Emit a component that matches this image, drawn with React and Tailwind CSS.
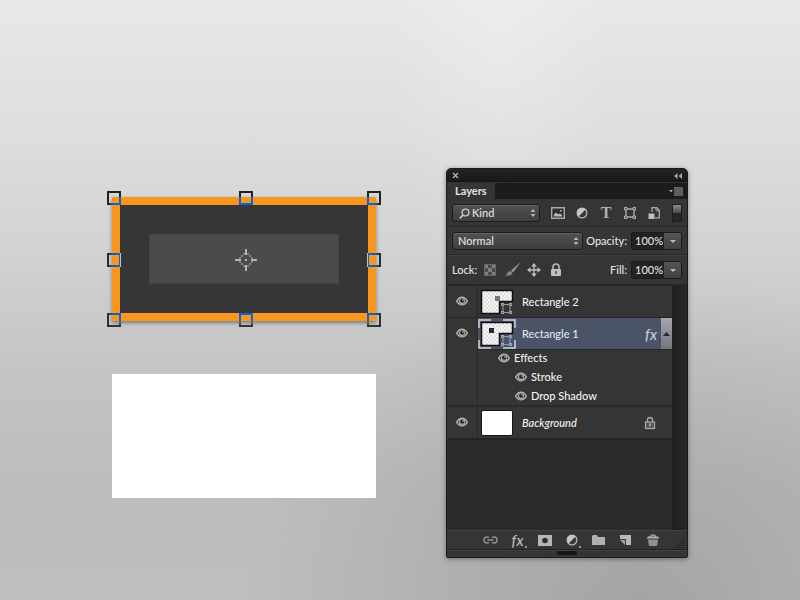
import React from "react";

const handles = [
  "-left-[5px] -top-[6px]",
  "left-[127px] -top-[6px]",
  "left-[255px] -top-[6px]",
  "-left-[5px] top-[56px]",
  "left-[255px] top-[56px]",
  "-left-[5px] top-[116px]",
  "left-[127px] top-[116px]",
  "left-[255px] top-[116px]",
];

function Crosshair() {
  const ring = [
    [8, 4], [12, 4], [6, 6], [14, 6], [4, 8], [16, 8],
    [4, 12], [16, 12], [6, 14], [14, 14], [8, 16], [12, 16],
  ];
  return (
    <svg width="22" height="22" viewBox="0 0 22 22" shapeRendering="crispEdges" aria-hidden="true">
      {ring.map(([x, y]) => (
        <rect key={x + "-" + y} x={x} y={y} width="2" height="2" fill="#808080" />
      ))}
      <path d="M10 0h2v6h-2zM10 16h2v6h-2zM0 10h6v2H0zM16 10h6v2h-6zM10 10h2v2h-2z" fill="#b4b4b4" />
    </svg>
  );
}

function Artwork() {
  return (
    <section aria-label="Canvas" className="flex flex-col gap-[53px] pt-[29px]">
      <div className="relative flex h-[124px] w-[264px] items-center justify-center border-8 border-[#f8961d] bg-[#363636] shadow-[0_2px_4px_rgba(0,0,0,0.4)]">
        <div className="h-[50px] w-[190px] border border-[#444444] bg-[#4b4b4b]" />
        <div className="absolute left-[115px] top-[44px]">
          <Crosshair />
        </div>
        <div className="absolute -left-2 -top-2 mix-blend-difference">
          {handles.map((place) => (
            <span key={place} className={"absolute size-[14px] border-2 border-[#f2fafa] " + place} />
          ))}
        </div>
      </div>
      <div className="h-[124px] w-[264px] bg-white" />
    </section>
  );
}

function Eye() {
  return (
    <svg width="12" height="10" viewBox="0 0 12 10" aria-hidden="true">
      <path d="M.6 5.200C2 2.600 3.800 1.200 6 1.200s4 1.400 5.400 4C10 7.600 8.200 8.900 6 8.900S2 7.600.6 5.200Z" fill="#4a4a4a" stroke="#b0b0b0" strokeWidth="1.400" />
      <circle cx="6" cy="4.900" r="3" fill="#b4b4b4" />
      <circle cx="6.200" cy="4.700" r="2.100" fill="#1f1f1f" />
      <circle cx="7" cy="4" r=".8" fill="#e4e4e4" />
    </svg>
  );
}

function EyeButton({ label, className = "" }) {
  return (
    <button type="button" aria-label={"Toggle visibility of " + label} className={"flex items-center justify-center " + className}>
      <Eye />
    </button>
  );
}

function UpDown() {
  return (
    <svg width="6" height="8" viewBox="0 0 6 8" className="pointer-events-none absolute right-1 top-[5px]" aria-hidden="true">
      <path d="M3 0l2.500 3h-5zM3 8L.5 5h5z" fill="#b4b4b4" />
    </svg>
  );
}

function Adjust() {
  return (
    <svg width="12" height="12" viewBox="0 0 12 12" aria-hidden="true">
      <circle cx="6" cy="6" r="4.900" fill="#3a3a3a" stroke="#b8b8b8" strokeWidth="1.200" />
      <path d="M2.500 9.500A4.900 4.900 0 0 1 9.500 2.500Z" fill="#c6c6c6" />
    </svg>
  );
}

function ShapeIcon() {
  return (
    <svg width="12" height="12" viewBox="0 0 12 12" fill="none" aria-hidden="true">
      <path d="M2 2h8v8H2z" stroke="#a8a8a8" strokeWidth="1.400" />
      <path d="M.5.500h2.500v2.500H.5zM9 .5h2.500v2.500H9zM.5 9h2.500v2.500H.5zM9 9h2.500v2.500H9z" fill="#444" stroke="#b4b4b4" />
    </svg>
  );
}

const filters = [
  {
    label: "Filter pixel layers",
    icon: (
      <svg width="14" height="12" viewBox="0 0 14 12" aria-hidden="true">
        <path d="M.7.700h12.600v10.600H.7z" fill="#303030" stroke="#a9a9a9" strokeWidth="1.400" />
        <path d="M3 9.500V7.500l2-2L7 7.500l1.500-1 2.500 1.500v1.500z" fill="#bdbdbd" />
        <path d="M9 3h1.500v1.500H9z" fill="#bdbdbd" />
      </svg>
    ),
  },
  { label: "Filter adjustment layers", icon: <Adjust /> },
  {
    label: "Filter type layers",
    icon: <span className="font-['Liberation_Serif',serif] text-base font-bold leading-4 text-[#b0b0b0]">T</span>,
  },
  { label: "Filter shape layers", icon: <ShapeIcon /> },
  {
    label: "Filter smart objects",
    icon: (
      <svg width="12" height="12" viewBox="0 0 12 12" aria-hidden="true">
        <path d="M4 5V.7h4.500L11.300 3v7.800H7" fill="none" stroke="#aaa" strokeWidth="1.300" />
        <path d="M8 .700v3h3" fill="none" stroke="#aaa" />
        <path d="M.5 6.500h6V12h-6z" fill="#c0c0c0" />
      </svg>
    ),
  },
];

const selectStyle =
  "h-[18px] w-full appearance-none rounded-[3px] border border-[#1c1c1c] bg-linear-to-b from-[#515151] to-[#3e3e3e] text-[11px] leading-4 text-[#e2e2e2] shadow-[inset_0_1px_0_#626262]";

function Percent({ id, label }) {
  return (
    <div className="flex items-center gap-1">
      <label htmlFor={id}>{label}</label>
      <div className="flex h-[18px] w-[51px] overflow-hidden rounded-[2px] border border-[#1a1a1a]">
        <input id={id} defaultValue="100%" className="w-8 bg-[#222222] pl-[3px] text-[11px] leading-4 text-[#e0e0e0]" />
        <button type="button" aria-label={label + " slider"} className="flex flex-1 items-center justify-center bg-linear-to-b from-[#555555] to-[#414141]">
          <svg width="6" height="3" viewBox="0 0 6 3" aria-hidden="true">
            <path d="M0 0h6L3 3z" fill="#bcbcbc" />
          </svg>
        </button>
      </div>
    </div>
  );
}

const locks = [
  {
    label: "Lock transparent pixels",
    icon: (
      <svg width="12" height="12" viewBox="0 0 12 12" shapeRendering="crispEdges" aria-hidden="true">
        <path d="M0 0h12v12H0z" fill="#666" />
        <path d="M1 1h3v3H1zM8 1h3v3H8zM4 4h4v4H4zM1 8h3v3H1zM8 8h3v3H8z" fill="#7e7e7e" />
        <path d="M4 1h4v3H4zM1 4h3v4H1zM8 4h3v4H8zM4 8h4v3H4z" fill="#4c4c4c" />
      </svg>
    ),
  },
  {
    label: "Lock image pixels",
    icon: (
      <svg width="16" height="14" viewBox="0 0 16 14" aria-hidden="true">
        <path d="M15.700.300L9.200 9 7 7.500z" fill="#929292" stroke="#929292" strokeWidth=".5" />
        <path d="M6.300 8l2.200 1.700c-.4 2.400-3.500 3.600-8 2.600 2-.3 2.300-1 2.900-2.300C4 8.600 5 8 6.300 8z" fill="#858585" />
      </svg>
    ),
  },
  {
    label: "Lock position",
    icon: (
      <svg width="14" height="14" viewBox="0 0 14 14" aria-hidden="true">
        <path d="M7 2v10M2 7h10" stroke="#bcbcbc" strokeWidth="1.400" />
        <path d="M7 0l2.800 3.500H4.200zM7 14l-2.800-3.500h5.600zM0 7l3.500-2.800v5.600zM14 7l-3.500 2.800V4.200z" fill="#bcbcbc" />
      </svg>
    ),
  },
  {
    label: "Lock all",
    icon: (
      <svg width="12" height="14" viewBox="0 0 12 14" aria-hidden="true">
        <path d="M3 7V4a3 3 0 0 1 6 0v3" fill="none" stroke="#bdbdbd" strokeWidth="1.500" />
        <rect x="1" y="6" width="10" height="7" rx="1" fill="#c0c0c0" />
        <path d="M5.300 8h1.400v3H5.300z" fill="#444" />
      </svg>
    ),
  },
];

function Thumbnail({ selected = false }) {
  return (
    <svg width="38" height="30" viewBox="0 0 38 30" aria-hidden="true">
      <defs>
        <pattern id="checks" width="4" height="4" patternUnits="userSpaceOnUse">
          <path d="M0 0h4v4H0z" fill="#f6f6f6" />
          <path d="M0 0h2v2H0zM2 2h2v2H2z" fill="#dedede" />
        </pattern>
      </defs>
      {selected && (
        <path d="M1 9V1h12M25 1h12v8M37 21v8H25M13 29H1v-8" fill="none" stroke="#d0d4dc" strokeWidth="1.500" />
      )}
      <path d="M3.500 3.500h31v11h-13v12h-18z" fill="url(#checks)" stroke="#111" strokeWidth="1.500" />
      {selected ? <path d="M11 9h5v5h-5z" fill="#292929" /> : <path d="M17 9h5v5h-5z" fill="#777" />}
      <path d="M25 17.500h7v8h-7z" fill="none" stroke={selected ? "#8e9bb4" : "#999"} />
      <path
        d="M23 16h3v3h-3zM31 16h3v3h-3zM23 24h3v3h-3zM31 24h3v3h-3z"
        fill={selected ? "#9aa5bb" : "#a0a0a0"}
      />
      <path d="M24 17h1v1h-1zM32 17h1v1h-1zM24 25h1v1h-1zM32 25h1v1h-1z" fill={selected ? "#65718a" : "#555"} />
    </svg>
  );
}

function Effect({ name, className }) {
  return (
    <li className={"flex items-center gap-1 " + className}>
      <EyeButton label={name} className="w-[13px]" />
      <span>{name}</span>
    </li>
  );
}

function Layers() {
  return (
    <div className="flex min-h-0 flex-1 bg-[#2b2b2b]">
      <ul className="min-w-0 flex-1 text-[#f2f2f2]">
        <li className="flex h-8 items-center border-b border-[#252525] bg-[#353535]">
          <EyeButton label="Rectangle 2" className="h-full w-[31px] border-r border-[#2b2b2b] pb-[2px]" />
          <Thumbnail />
          <span className="ml-1.5">Rectangle 2</span>
        </li>
        <li className="border-b-2 border-[#292929] bg-[#353535]">
          <div className="flex h-8">
            <EyeButton label="Rectangle 1" className="w-[31px] border-r border-[#2b2b2b] pb-[2px]" />
            <div className="flex flex-1 items-center border-b border-[#282828] bg-[#4b5467]">
              <Thumbnail selected />
              <span className="ml-1.5 text-[#e2e4ea]">Rectangle 1</span>
              <span className="ml-auto mr-1 text-[15px] italic leading-4 text-[#c9ccd3]">fx</span>
              <button type="button" aria-label="Collapse effects" className="flex h-full w-[11px] items-center justify-center bg-linear-to-b from-[#a6a8af] to-[#72757f]">
                <svg width="7" height="4" viewBox="0 0 7 4" aria-hidden="true">
                  <path d="M0 4h7L3.500 0z" fill="#292929" />
                </svg>
              </button>
            </div>
          </div>
          <ul className="ml-[30px] border-l border-[#2b2b2b]">
            <Effect name="Effects" className="mb-[2px] h-[15px] pl-[19px]" />
            <Effect name="Stroke" className="h-[19px] pl-9" />
            <Effect name="Drop Shadow" className="h-[19px] pl-9" />
          </ul>
        </li>
        <li className="flex h-[33px] items-center border-b-2 border-[#252525] bg-[#353535]">
          <EyeButton label="Background" className="h-full w-[31px] border-r border-[#2b2b2b] pb-[2px]" />
          <span className="ml-[3px] h-[26px] w-8 rounded-[2px] border border-[#141414] bg-white" />
          <em className="ml-[9px]">Background</em>
          <svg width="12" height="14" viewBox="0 0 12 14" className="ml-auto mr-4" aria-label="Locked" role="img">
            <path d="M3.500 6V4a2.500 2.500 0 0 1 5 0v2" fill="none" stroke="#aaa" strokeWidth="1.300" />
            <rect x="1.500" y="6" width="9" height="6.500" fill="#555" stroke="#aaa" strokeWidth="1.200" />
            <path d="M5.300 7.500h1.400v3H5.300z" fill="#bbb" />
          </svg>
        </li>
      </ul>
      <div className="w-[15px] bg-linear-to-r from-[#1e1e1e] to-[#282828]" />
    </div>
  );
}

const actions = [
  {
    label: "Link layers",
    icon: (
      <svg width="15" height="8" viewBox="0 0 15 8" fill="none" stroke="#929292" strokeWidth="1.400" aria-hidden="true">
        <path d="M6 1.500A3 3 0 0 0 4 1a3 3 0 0 0 0 6 3 3 0 0 0 2-.5M9 1.500A3 3 0 0 1 11 1a3 3 0 0 1 0 6 3 3 0 0 1-2-.5M4.500 4h6" />
      </svg>
    ),
  },
  { label: "Add a layer style", dot: true, icon: <span className="text-[15px] italic leading-4 text-[#bcbcbc]">fx</span> },
  {
    label: "Add a mask",
    icon: (
      <svg width="14" height="11" viewBox="0 0 14 11" aria-hidden="true">
        <path d="M0 0h14v11H0z" fill="#b5b5b5" />
        <circle cx="7" cy="5.500" r="2.800" fill="#303030" />
      </svg>
    ),
  },
  { label: "New adjustment layer", dot: true, icon: <Adjust /> },
  {
    label: "New group",
    icon: (
      <svg width="13" height="10" viewBox="0 0 13 10" aria-hidden="true">
        <path d="M0 10V1l1-1h4l1 2h7v8z" fill="#b0b0b0" />
      </svg>
    ),
  },
  {
    label: "New layer",
    icon: (
      <svg width="11" height="10" viewBox="0 0 11 10" aria-hidden="true">
        <path d="M0 0h11v10H6V4H0z" fill="#b8b8b8" />
        <path d="M0 5h5v5z" fill="#a5a5a5" />
      </svg>
    ),
  },
  {
    label: "Delete layer",
    icon: (
      <svg width="12" height="12" viewBox="0 0 12 12" aria-hidden="true">
        <path d="M3.500 3a2.500 2.200 0 0 1 5 0" fill="none" stroke="#aaa" strokeWidth="1.300" />
        <path d="M0 4.500V3.500l1-1h10l1 1v1z" fill="#b5b5b5" />
        <path d="M1 5.500h10l-.7 5.500-1 1H2.700l-1-1z" fill="#909090" />
      </svg>
    ),
  },
];

function Panel() {
  return (
    <aside
      aria-label="Layers panel"
      className="flex h-[390px] w-[242px] flex-col rounded-t-[5px] rounded-b-[2px] border border-[#1b1b1b] bg-[#353535] font-['Lato','Liberation_Sans',sans-serif] text-[11px] font-medium leading-4 text-[#e2e2e2] shadow-[0_1px_5px_rgba(0,0,0,0.4)]"
    >
      <header className="flex h-[13px] items-center justify-between rounded-t-[4px] bg-linear-to-b from-[#242424] to-[#171717] px-[5px]">
        <button type="button" aria-label="Close panel">
          <svg width="7" height="7" viewBox="0 0 7 7" className="block" aria-hidden="true">
            <path d="M1 1l5 5M6 1L1 6" stroke="#b8b8b8" strokeWidth="1.200" />
          </svg>
        </button>
        <button type="button" aria-label="Collapse panel">
          <svg width="8" height="6" viewBox="0 0 8 6" className="block" aria-hidden="true">
            <path d="M3.500 0v6L0 3zM8 0v6L4.500 3z" fill="#a5a5a5" />
          </svg>
        </button>
      </header>
      <div className="flex h-[17px] items-stretch justify-between border-t border-[#303030] bg-[#1c1c1c]">
        <h1 className="bg-[#353535] px-2 font-bold">Layers</h1>
        <button type="button" aria-label="Panel menu" className="mr-1 flex items-center">
          <svg width="14" height="9" viewBox="0 0 14 9" aria-hidden="true">
            <path d="M0 3h4L2 5.500z" fill="#aaa" />
            <path d="M5 0h9v9H5z" fill="#5a5a5a" />
            <path d="M5 .5h9M5 2.500h9M5 4.500h9M5 6.500h9M5 8.500h9" stroke="#666" strokeWidth=".8" />
          </svg>
        </button>
      </div>
      <div className="flex h-7 items-center justify-between border-b border-[#272727] px-[5px]">
        <div className="relative w-[88px]">
          <select aria-label="Filter by" defaultValue="Kind" className={selectStyle + " pl-[19px]"}>
            <option>Kind</option>
          </select>
          <svg width="11" height="11" viewBox="0 0 11 11" className="pointer-events-none absolute left-[7px] top-1" aria-hidden="true">
            <circle cx="6.500" cy="4.500" r="3.400" fill="none" stroke="#c8c8c8" strokeWidth="1.400" />
            <path d="M4 7L.8 10.300" stroke="#c8c8c8" strokeWidth="1.700" />
          </svg>
          <UpDown />
        </div>
        <div className="flex">
          {filters.map((filter) => (
            <button key={filter.label} type="button" aria-label={filter.label} className="flex h-4 w-6 items-center justify-center">
              {filter.icon}
            </button>
          ))}
        </div>
        <button type="button" role="switch" aria-checked="true" aria-label="Layer filtering" className="flex h-[18px] w-[10px] items-start border border-[#1c1c1c] bg-[#262626]">
          <span className="block h-2 w-full bg-linear-to-b from-[#8c8c8c] to-[#4c4c4c]" />
        </button>
      </div>
      <div className="flex h-7 items-center justify-between border-b border-t border-b-[#272727] border-t-[#3f3f3f] px-[5px]">
        <div className="relative w-[131px]">
          <select aria-label="Blend mode" defaultValue="Normal" className={selectStyle + " pl-[5px]"}>
            <option>Normal</option>
          </select>
          <UpDown />
        </div>
        <Percent id="opacity" label="Opacity:" />
      </div>
      <div className="flex h-[31px] items-center justify-between border-b-2 border-t border-b-[#272727] border-t-[#3f3f3f] px-[5px]">
        <div className="flex items-center">
          <span className="w-[27px]">Lock:</span>
          {locks.map((lock) => (
            <button key={lock.label} type="button" aria-label={lock.label} className="flex h-4 w-[22px] items-center justify-center">
              {lock.icon}
            </button>
          ))}
        </div>
        <Percent id="fill" label="Fill:" />
      </div>
      <Layers />
      <div className="relative flex h-5 items-center border-b border-t border-b-[#222222] border-t-[#434343] pl-[30px]">
        {actions.map((action) => (
          <button key={action.label} type="button" aria-label={action.label} className="relative flex h-4 w-[27px] items-center justify-center">
            {action.icon}
            {action.dot && <span className="absolute bottom-0 right-1 size-[2px] bg-[#929292]" />}
          </button>
        ))}
        <svg width="10" height="10" viewBox="0 0 10 10" className="absolute bottom-0 right-[2px]" aria-hidden="true">
          <path d="M8 0h1v1H8zM6 2h1v1H6zM8 2h1v1H8zM4 4h1v1H4zM6 4h1v1H6zM8 4h1v1H8zM2 6h1v1H2zM4 6h1v1H4zM6 6h1v1H6zM8 6h1v1H8zM0 8h1v1H0zM2 8h1v1H2zM4 8h1v1H4zM6 8h1v1H6zM8 8h1v1H8z" fill="#1d1d1d" />
        </svg>
      </div>
      <div className="flex h-[7px] justify-center border-t border-[#414141]">
        <span className="h-1 w-5 bg-[#171717]" />
      </div>
    </aside>
  );
}

export default function App() {
  return (
    <main className="flex min-h-screen items-start gap-[70px] bg-[radial-gradient(ellipse_110px_300px_at_500px_20px,rgba(255,255,255,0.22),transparent),radial-gradient(ellipse_400px_360px_at_640px_620px,rgba(0,0,0,0.14),transparent),linear-gradient(180deg,#e8e8e8_0%,#dedede_22%,#d2d2d2_42%,#c4c4c4_62%,#bdbdbd_80%,#bebebe_100%)] pl-28 pt-[168px]">
      <Artwork />
      <Panel />
    </main>
  );
}
